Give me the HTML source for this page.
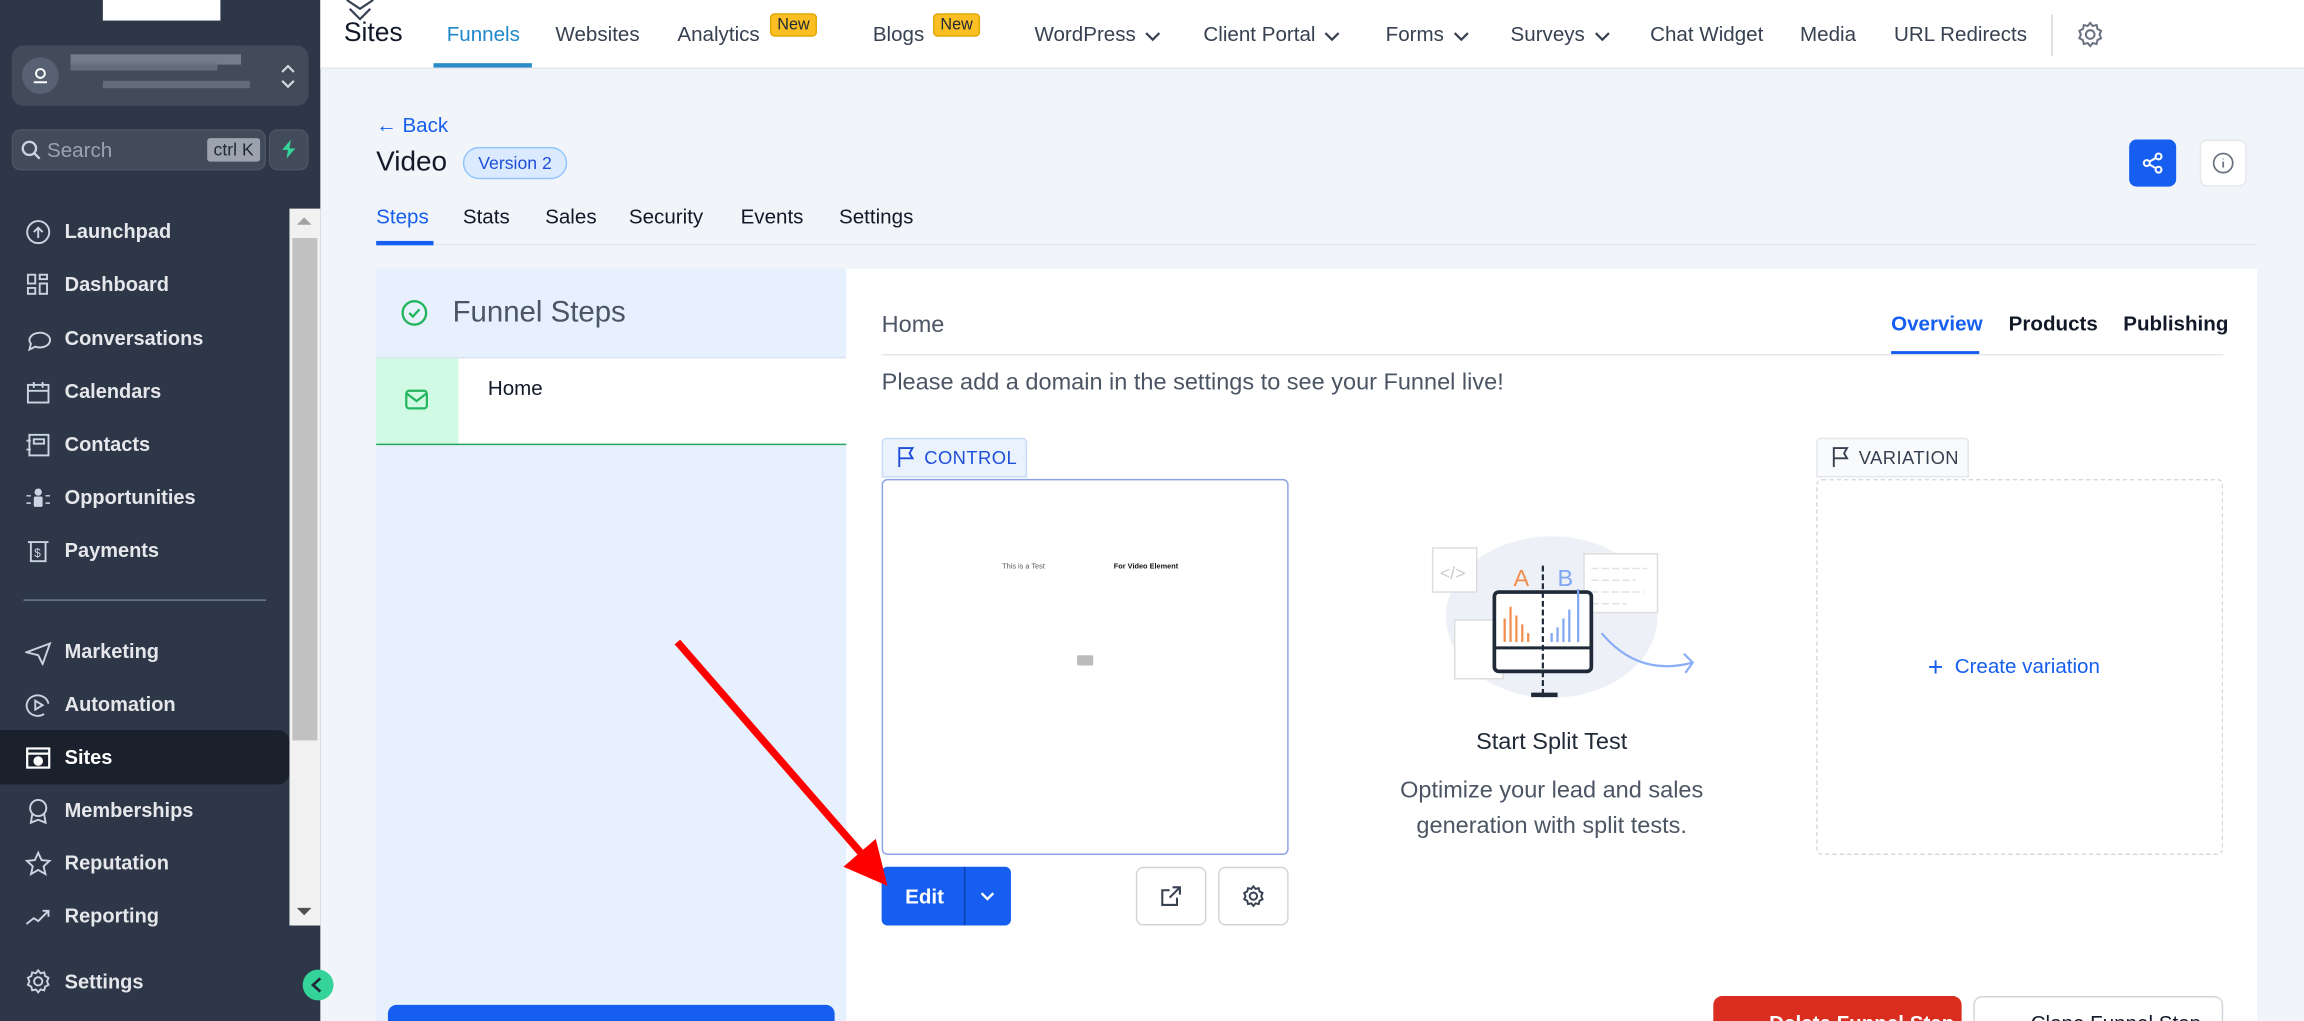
<!DOCTYPE html>
<html><head><meta charset="utf-8">
<style>
*{box-sizing:border-box;margin:0;padding:0}
html,body{width:2304px;height:1021px;overflow:hidden;background:#f1f5f9}
#s{position:absolute;left:0;top:0;width:1568px;height:695px;transform:scale(1.46939,1.46906);transform-origin:0 0;font-family:"Liberation Sans",sans-serif;background:#f1f5f9;overflow:hidden}
.a{position:absolute}
.sb{left:0;top:0;width:218px;height:695px;background:#2d3748}
.nav{position:absolute;left:44px;font-size:13.6px;font-weight:bold;color:#e5e7eb;line-height:16px}
.ic{position:absolute;left:17px;width:18px;height:18px}
.top{left:218px;top:0;width:1350px;height:47px;background:#fff;border-bottom:1px solid #e5e7eb}
.tt{position:absolute;top:15px;font-size:14px;color:#374151}
.tt svg{vertical-align:-1px;margin-left:6px}
.new{position:absolute;top:9px;background:#fbbf24;color:#1f2937;font-size:11px;padding:1px 4px;border-radius:3px;border:1px solid #e0a800}
.tab{position:absolute;top:139px;font-size:14px;color:#111827}
.t2{position:absolute;top:212px;font-size:14px;font-weight:bold;color:#111827}
</style></head><body><div id="s">
<div class="a sb"></div>
<div class="a" style="left:70px;top:0;width:80px;height:14px;background:#fff"></div>
<div class="a" style="left:8px;top:31px;width:202px;height:41px;background:#414b5a;border-radius:8px"></div>
<div class="a" style="left:15px;top:39px;width:25px;height:25px;border-radius:50%;background:#576172"></div>
<svg class="a" style="left:21px;top:45px" width="13" height="13" viewBox="0 0 13 13" fill="none" stroke="#fff" stroke-width="1.3"><circle cx="6.5" cy="5" r="3"/><path d="M2 11h9"/></svg>
<div class="a" style="left:48px;top:37px;width:116px;height:7px;background:#8a93a1;opacity:.7"></div>
<div class="a" style="left:48px;top:42px;width:100px;height:6px;background:#6b7483;opacity:.8"></div>
<div class="a" style="left:70px;top:55px;width:100px;height:5px;background:#6b7483;opacity:.8"></div>
<svg class="a" style="left:190px;top:42px" width="12" height="20" viewBox="0 0 12 20" fill="none" stroke="#d1d5db" stroke-width="1.5"><path d="M2 7l4-4 4 4M2 13l4 4 4-4"/></svg>
<div class="a" style="left:8px;top:88px;width:173px;height:28px;background:#414b5a;border-radius:6px;border:1px solid #4b5563"></div>
<svg class="a" style="left:14px;top:95px" width="14" height="14" viewBox="0 0 14 14" fill="none" stroke="#cbd5e1" stroke-width="1.6"><circle cx="6" cy="6" r="4.5"/><path d="M9.5 9.5L13 13"/></svg>
<div class="a" style="left:32px;top:94px;font-size:14px;color:#9ca3af">Search</div>
<div class="a" style="left:141px;top:94px;width:36px;height:16px;background:#9ca3af;color:#1f2937;font-size:12px;text-align:center;line-height:16px;border-radius:2px">ctrl K</div>
<div class="a" style="left:183px;top:88px;width:27px;height:28px;background:#414b5a;border-radius:6px;border:1px solid #4b5563"></div>
<svg class="a" style="left:190px;top:95px" width="13" height="13" viewBox="0 0 13 13"><path d="M8 0L2 7h4l-1 6 6-7H7z" fill="#34d399"/></svg>
<svg class="ic" style="top:149px" viewBox="0 0 18 18" fill="none" stroke="#cbd5e1" stroke-width="1.3"><circle cx="9" cy="9" r="7.5"/><path d="M9 13V6M6 9l3-3 3 3"/></svg>
<div class="nav" style="top:150px">Launchpad</div>
<svg class="ic" style="top:185px" viewBox="0 0 18 18" fill="none" stroke="#cbd5e1" stroke-width="1.3"><rect x="2" y="2" width="5" height="6"/><rect x="10" y="2" width="5" height="3"/><rect x="2" y="11" width="5" height="4"/><rect x="10" y="8" width="5" height="7"/></svg>
<div class="nav" style="top:186px">Dashboard</div>
<svg class="ic" style="top:222px" viewBox="0 0 18 18" fill="none" stroke="#cbd5e1" stroke-width="1.3"><path d="M3 16l1-4a7 5 0 1 1 3 2z"/></svg>
<div class="nav" style="top:223px">Conversations</div>
<svg class="ic" style="top:258px" viewBox="0 0 18 18" fill="none" stroke="#cbd5e1" stroke-width="1.3"><rect x="2" y="4" width="14" height="12"/><path d="M2 8h14M6 2v4M12 2v4"/></svg>
<div class="nav" style="top:259px">Calendars</div>
<svg class="ic" style="top:294px" viewBox="0 0 18 18" fill="none" stroke="#cbd5e1" stroke-width="1.3"><rect x="3" y="2" width="13" height="14"/><rect x="6" y="5" width="7" height="3"/><path d="M1 6h3M1 12h3"/></svg>
<div class="nav" style="top:295px">Contacts</div>
<svg class="ic" style="top:330px" viewBox="0 0 18 18" fill="#cbd5e1"><circle cx="9" cy="5" r="2.5"/><rect x="6" y="8" width="6" height="7" rx="1"/><path d="M1 7h3v1H1zM1 12h3v1H1zM14 7h3v1h-3zM14 12h3v1h-3z"/></svg>
<div class="nav" style="top:331px">Opportunities</div>
<svg class="ic" style="top:366px" viewBox="0 0 18 18" fill="none" stroke="#cbd5e1" stroke-width="1.3"><path d="M2 3h14M4 3v13h10V3"/><text x="6.3" y="13" font-size="8" fill="#cbd5e1" stroke="none" font-family="Liberation Sans">$</text></svg>
<div class="nav" style="top:367px">Payments</div>
<div class="a" style="left:16px;top:408px;width:165px;height:1px;background:#718096"></div>
<svg class="ic" style="top:435px" viewBox="0 0 18 18" fill="none" stroke="#cbd5e1" stroke-width="1.3"><path d="M1 9l16-6-5 14-3-6z"/></svg>
<div class="nav" style="top:436px">Marketing</div>
<svg class="ic" style="top:471px" viewBox="0 0 18 18" fill="none" stroke="#cbd5e1" stroke-width="1.3"><path d="M16 8a7.5 7 0 1 0-3 7"/><path d="M7 6l5 3-5 3z"/></svg>
<div class="nav" style="top:472px">Automation</div>
<div class="a" style="left:0;top:497px;width:197px;height:37px;background:#1a202c;border-radius:0 8px 8px 0"></div>
<svg class="ic" style="top:507px" viewBox="0 0 18 18" fill="none" stroke="#fff" stroke-width="1.5"><rect x="1.5" y="2.5" width="15" height="13"/><path d="M1.5 6h15"/><circle cx="9" cy="11" r="2.5" fill="#fff"/></svg>
<div class="nav" style="top:508px;color:#fff">Sites</div>
<svg class="ic" style="top:543px" viewBox="0 0 18 18" fill="none" stroke="#cbd5e1" stroke-width="1.3"><circle cx="9" cy="7" r="5.5"/><path d="M5 11l-1 6 5-2 5 2-1-6"/></svg>
<div class="nav" style="top:544px">Memberships</div>
<svg class="ic" style="top:579px" viewBox="0 0 18 18" fill="none" stroke="#cbd5e1" stroke-width="1.3"><path d="M9 1.5l2.3 5 5.4.5-4 3.7 1.2 5.3L9 13.2 4.1 16l1.2-5.3-4-3.7 5.4-.5z"/></svg>
<div class="nav" style="top:580px">Reputation</div>
<svg class="ic" style="top:615px" viewBox="0 0 18 18" fill="none" stroke="#cbd5e1" stroke-width="1.3"><path d="M1 14l5-4 3 2 7-7M12 5h4v4"/></svg>
<div class="nav" style="top:616px">Reporting</div>
<svg class="ic" style="top:659px" viewBox="0 0 18 18" fill="none" stroke="#cbd5e1" stroke-width="1.3"><circle cx="9" cy="9" r="2.8"/><path d="M9 1.5l1.6 2 2.5-.6.6 2.5 2.3 1.2-1 2.4 1 2.4-2.3 1.2-.6 2.5-2.5-.6L9 16.5l-1.6-2-2.5.6-.6-2.5-2.3-1.2 1-2.4-1-2.4 2.3-1.2.6-2.5 2.5.6z"/></svg>
<div class="nav" style="top:661px">Settings</div>
<div class="a" style="left:197px;top:142px;width:21px;height:488px;background:#f1f1f1"></div>
<div class="a" style="left:199px;top:162px;width:17px;height:342px;background:#c1c1c1"></div>
<div class="a" style="left:202px;top:148px;border:5px solid transparent;border-bottom:5px solid #a3a3a3;border-top:0;width:0;height:0"></div>
<div class="a" style="left:202px;top:618px;border:5px solid transparent;border-top:5px solid #505050;border-bottom:0;width:0;height:0"></div>
<div class="a" style="left:206px;top:660px;width:21px;height:21px;border-radius:50%;background:#34d399"></div>
<svg class="a" style="left:211px;top:665px" width="10" height="11" viewBox="0 0 10 11" fill="none" stroke="#1f2937" stroke-width="1.8"><path d="M7 1L2 5.5 7 10"/></svg>
<div class="a top"></div>
<svg class="a" style="left:234px;top:0" width="22" height="14" viewBox="0 0 22 14" fill="none" stroke="#374151" stroke-width="1.5"><path d="M2 0l9 6 9-6M4 6l7 7 7-7"/></svg>
<div class="a" style="left:234px;top:12px;font-size:18px;color:#111827">Sites</div>
<div class="tt" style="left:304px;color:#1e88c8">Funnels</div>
<div class="a" style="left:295px;top:43px;width:67px;height:3px;background:#2b8dc8"></div>
<div class="tt" style="left:378px">Websites</div>
<div class="tt" style="left:461px">Analytics</div><div class="new" style="left:524px">New</div>
<div class="tt" style="left:594px">Blogs</div><div class="new" style="left:635px">New</div>
<div class="tt" style="left:704px">WordPress<svg width="11" height="8" viewBox="0 0 11 8" fill="none" stroke="#374151" stroke-width="1.5"><path d="M1 1.5l4.5 4.5 4.5-4.5"/></svg></div>
<div class="tt" style="left:819px">Client Portal<svg width="11" height="8" viewBox="0 0 11 8" fill="none" stroke="#374151" stroke-width="1.5"><path d="M1 1.5l4.5 4.5 4.5-4.5"/></svg></div>
<div class="tt" style="left:943px">Forms<svg width="11" height="8" viewBox="0 0 11 8" fill="none" stroke="#374151" stroke-width="1.5"><path d="M1 1.5l4.5 4.5 4.5-4.5"/></svg></div>
<div class="tt" style="left:1028px">Surveys<svg width="11" height="8" viewBox="0 0 11 8" fill="none" stroke="#374151" stroke-width="1.5"><path d="M1 1.5l4.5 4.5 4.5-4.5"/></svg></div>
<div class="tt" style="left:1123px">Chat Widget</div>
<div class="tt" style="left:1225px">Media</div>
<div class="tt" style="left:1289px">URL Redirects</div>
<div class="a" style="left:1396px;top:10px;width:1px;height:28px;background:#d1d5db"></div>
<svg class="a" style="left:1413px;top:14px" width="19" height="19" viewBox="0 0 18 18" fill="none" stroke="#6b7280" stroke-width="1.3"><circle cx="9" cy="9" r="2.8"/><path d="M9 1.5l1.6 2 2.5-.6.6 2.5 2.3 1.2-1 2.4 1 2.4-2.3 1.2-.6 2.5-2.5-.6L9 16.5l-1.6-2-2.5.6-.6-2.5-2.3-1.2 1-2.4-1-2.4 2.3-1.2.6-2.5 2.5.6z"/></svg>
<div class="a" style="left:256px;top:77px;font-size:14px;color:#155eef">← Back</div>
<div class="a" style="left:256px;top:100px;font-size:19px;color:#111827">Video</div>
<div class="a" style="left:315px;top:100px;width:71px;height:22px;border-radius:11px;background:#dbeafe;border:1px solid #93c5fd;color:#1d4ed8;font-size:12px;text-align:center;line-height:20px">Version 2</div>
<div class="a" style="left:1449px;top:95px;width:32px;height:32px;border-radius:5px;background:#155eef"></div>
<svg class="a" style="left:1457px;top:103px" width="16" height="16" viewBox="0 0 16 16" fill="none" stroke="#fff" stroke-width="1.4"><circle cx="12" cy="3.5" r="2"/><circle cx="4" cy="8" r="2"/><circle cx="12" cy="12.5" r="2"/><path d="M5.8 7l4.4-2.5M5.8 9l4.4 2.5"/></svg>
<div class="a" style="left:1497px;top:95px;width:32px;height:32px;border-radius:5px;background:#fff;border:1px solid #e5e7eb"></div>
<svg class="a" style="left:1505px;top:103px" width="16" height="16" viewBox="0 0 16 16" fill="none" stroke="#6b7280" stroke-width="1.2"><circle cx="8" cy="8" r="6.5"/><path d="M8 7v4M8 5v.5"/></svg>
<div class="tab" style="left:256px;color:#155eef">Steps</div>
<div class="tab" style="left:315px">Stats</div>
<div class="tab" style="left:371px">Sales</div>
<div class="tab" style="left:428px">Security</div>
<div class="tab" style="left:504px">Events</div>
<div class="tab" style="left:571px">Settings</div>
<div class="a" style="left:256px;top:166px;width:1280px;height:1px;background:#e2e8f0"></div>
<div class="a" style="left:256px;top:164px;width:39px;height:3px;background:#155eef"></div>
<div class="a" style="left:256px;top:183px;width:320px;height:512px;background:#e6f1fd"></div>
<svg class="a" style="left:272px;top:203px" width="20" height="20" viewBox="0 0 20 20" fill="none" stroke="#22b55e" stroke-width="1.6"><circle cx="10" cy="10" r="8"/><path d="M6.5 10l2.5 2.5 4.5-5"/></svg>
<div class="a" style="left:308px;top:202px;font-size:20px;color:#4b5563">Funnel Steps</div>
<div class="a" style="left:256px;top:243px;width:320px;height:1px;background:#dbe4ee"></div>
<div class="a" style="left:256px;top:244px;width:56px;height:58px;background:#d1fae5"></div>
<div class="a" style="left:312px;top:244px;width:264px;height:58px;background:#fff"></div>
<div class="a" style="left:256px;top:302px;width:320px;height:1px;background:#22a55e"></div>
<svg class="a" style="left:275px;top:264px" width="17" height="16" viewBox="0 0 17 16" fill="none" stroke="#22b55e" stroke-width="1.5"><rect x="1.5" y="2" width="14" height="12" rx="2"/><path d="M2 4l6.5 5 6.5-5"/></svg>
<div class="a" style="left:332px;top:256px;font-size:14px;color:#111827">Home</div>
<div class="a" style="left:264px;top:684px;width:304px;height:20px;background:#155eef;border-radius:6px"></div>
<div class="a" style="left:576px;top:183px;width:960px;height:512px;background:#fff"></div>
<div class="a" style="left:600px;top:213px;font-size:16px;color:#4b5563">Home</div>
<div class="t2" style="left:1287px;color:#155eef">Overview</div>
<div class="t2" style="left:1367px">Products</div>
<div class="t2" style="left:1445px">Publishing</div>
<div class="a" style="left:600px;top:241px;width:913px;height:1px;background:#e5e7eb"></div>
<div class="a" style="left:1287px;top:239px;width:60px;height:2px;background:#155eef"></div>
<div class="a" style="left:600px;top:252px;font-size:16px;color:#4b5563">Please add a domain in the settings to see your Funnel live!</div>
<div class="a" style="left:600px;top:298px;width:99px;height:27px;background:#eaf2fe;border:1px solid #c7dcf7;border-radius:3px 3px 0 0"></div>
<svg class="a" style="left:610px;top:304px" width="13" height="14" viewBox="0 0 13 14" fill="none" stroke="#1d4ed8" stroke-width="1.3"><path d="M2 14V1h9l-2 3.5 2 3.5H2"/></svg>
<div class="a" style="left:629px;top:305px;font-size:12.5px;color:#1d4ed8;letter-spacing:.3px">CONTROL</div>
<div class="a" style="left:600px;top:326px;width:277px;height:256px;border:1px solid #8ca3e3;border-radius:4px;background:#fff"></div>
<div class="a" style="left:682px;top:383px;font-size:5px;color:#555">This is a Test</div>
<div class="a" style="left:758px;top:383px;font-size:5px;color:#111;font-weight:bold">For Video Element</div>
<div class="a" style="left:733px;top:446px;width:11px;height:7px;background:#bbb;border-radius:1px"></div>
<div class="a" style="left:600px;top:590px;width:88px;height:40px;background:#155eef;border-radius:4px"></div>
<div class="a" style="left:656px;top:590px;width:1px;height:40px;background:#0b3fb0"></div>
<div class="a" style="left:616px;top:602px;font-size:14px;font-weight:bold;color:#fff">Edit</div>
<svg class="a" style="left:666px;top:605px" width="12" height="10" viewBox="0 0 12 10" fill="none" stroke="#fff" stroke-width="1.6"><path d="M2 3l4 4 4-4"/></svg>
<div class="a" style="left:773px;top:590px;width:48px;height:40px;border:1px solid #d1d5db;border-radius:5px;background:#fff"></div>
<svg class="a" style="left:789px;top:602px" width="16" height="16" viewBox="0 0 16 16" fill="none" stroke="#374151" stroke-width="1.4"><path d="M9 2h5v5M14 2L7 9M12 9v5H2V4h5"/></svg>
<div class="a" style="left:829px;top:590px;width:48px;height:40px;border:1px solid #d1d5db;border-radius:5px;background:#fff"></div>
<svg class="a" style="left:845px;top:602px" width="16" height="16" viewBox="0 0 18 18" fill="none" stroke="#374151" stroke-width="1.5"><circle cx="9" cy="9" r="2.8"/><path d="M9 1.5l1.6 2 2.5-.6.6 2.5 2.3 1.2-1 2.4 1 2.4-2.3 1.2-.6 2.5-2.5-.6L9 16.5l-1.6-2-2.5.6-.6-2.5-2.3-1.2 1-2.4-1-2.4 2.3-1.2.6-2.5 2.5.6z"/></svg>
<svg class="a" style="left:970px;top:365px" width="190" height="110" viewBox="0 0 190 110" fill="none">
<ellipse cx="86" cy="55" rx="72" ry="55" fill="#eef0f7"/>
<rect x="5" y="8" width="30" height="30" stroke="#ddd" fill="#fff"/><text x="10" y="29" font-size="12" fill="#ccc" font-family="Liberation Sans">&lt;/&gt;</text>
<rect x="108" y="12" width="50" height="40" stroke="#ddd" fill="#fff"/><path d="M113 22h38M113 30h30M113 38h36M113 46h24" stroke="#e2e2e2" stroke-dasharray="5 2"/>
<rect x="20" y="57" width="33" height="40" stroke="#ddd" fill="#fff"/>
<rect x="47" y="38" width="66" height="54" rx="3" stroke="#1f2937" stroke-width="2.5" fill="#fff"/>
<path d="M47 76h66" stroke="#1f2937" stroke-width="2"/>
<path d="M80 20v92" stroke="#1f2937" stroke-width="1.5" stroke-dasharray="4 2"/>
<path d="M72 108h18" stroke="#1f2937" stroke-width="3"/>
<text x="60" y="34" font-size="16" fill="#f28c4b" font-family="Liberation Sans">A</text>
<text x="90" y="34" font-size="16" fill="#7fa6f3" font-family="Liberation Sans">B</text>
<path d="M54 72V56M58 72V48M62 72V54M66 72V60M70 72V66" stroke="#f28c4b" stroke-width="1.5"/>
<path d="M86 72V66M90 72V62M94 72V56M98 72V50M104 72V36" stroke="#7fa6f3" stroke-width="1.5"/>
<path d="M120 66q25 30 62 20M176 80l6 6-5 7" stroke="#8aaef5" stroke-width="1.5"/>
</svg>
<div class="a" style="left:936px;top:497px;width:240px;text-align:center;font-size:16px;color:#1f2937">Start Split Test</div>
<div class="a" style="left:936px;top:527px;width:240px;text-align:center;font-size:16px;line-height:24px;color:#4b5563">Optimize your lead and sales generation with split tests.</div>
<div class="a" style="left:1236px;top:298px;width:104px;height:27px;background:#f9fafb;border:1px solid #e5e7eb;border-radius:3px 3px 0 0"></div>
<svg class="a" style="left:1246px;top:304px" width="13" height="14" viewBox="0 0 13 14" fill="none" stroke="#374151" stroke-width="1.3"><path d="M2 14V1h9l-2 3.5 2 3.5H2"/></svg>
<div class="a" style="left:1265px;top:305px;font-size:12.5px;color:#374151;letter-spacing:.3px">VARIATION</div>
<div class="a" style="left:1236px;top:326px;width:277px;height:256px;border:1px dashed #d6d9de;border-radius:4px"></div>
<div class="a" style="left:1312px;top:444px;font-size:14px;color:#155eef"><span style="font-size:18px;vertical-align:-2px">+</span>&nbsp; Create variation</div>
<div class="a" style="left:1166px;top:678px;width:169px;height:30px;background:#d92d20;border-radius:6px;color:#fff;font-size:14px;font-weight:bold;padding:10px 0 0 38px">Delete Funnel Step</div>
<div class="a" style="left:1343px;top:678px;width:170px;height:30px;background:#fff;border:1px solid #d1d5db;border-radius:6px;color:#111827;font-size:14px;padding:9px 0 0 38px">Clone Funnel Step</div>
<svg class="a" style="left:0;top:0" width="1568" height="695"><path d="M461 437L588 583" stroke="#f00" stroke-width="5"/><path d="M604 603L574 590L596 571z" fill="#f00"/></svg>
</div></body></html>
